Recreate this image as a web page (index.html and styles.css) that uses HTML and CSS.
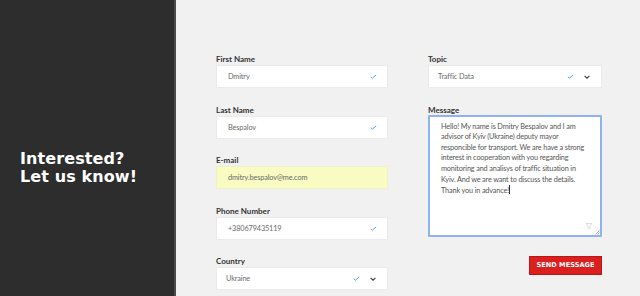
FILE: index.html
```html
<!DOCTYPE html>
<html lang="en">
<head>
    <meta charset="UTF-8">
    <meta name="viewport" content="width=device-width, initial-scale=1.0">
    <title>Contact</title>
    <link rel="stylesheet" href="styles.css">
</head>
<body>
    <div class="page">
        <aside class="side">
            <h1>Interested?<br>Let us know!</h1>
        </aside>
        <form class="contact">
            <div class="col">
                <div class="field">
                    <label>First Name</label>
                    <div class="input">
                        <span class="value">Dmitry</span>
                        <svg class="check" width="7" height="5" viewBox="0 0 7 5"><path d="M0.8 2.8 L2.4 4.2 L6.2 0.8" fill="none" stroke="#5aa2ea" stroke-width="1"/></svg>
                    </div>
                </div>
                <div class="field">
                    <label>Last Name</label>
                    <div class="input">
                        <span class="value">Bespalov</span>
                        <svg class="check" width="7" height="5" viewBox="0 0 7 5"><path d="M0.8 2.8 L2.4 4.2 L6.2 0.8" fill="none" stroke="#5aa2ea" stroke-width="1"/></svg>
                    </div>
                </div>
                <div class="field">
                    <label>E-mail</label>
                    <div class="input autofill">
                        <span class="value">dmitry.bespalov@me.com</span>
                    </div>
                </div>
                <div class="field">
                    <label>Phone Number</label>
                    <div class="input">
                        <span class="value">+380679435119</span>
                        <svg class="check" width="7" height="5" viewBox="0 0 7 5"><path d="M0.8 2.8 L2.4 4.2 L6.2 0.8" fill="none" stroke="#5aa2ea" stroke-width="1"/></svg>
                    </div>
                </div>
                <div class="field">
                    <label>Country</label>
                    <div class="input select">
                        <span class="value">Ukraine</span>
                        <svg class="check" width="7" height="5" viewBox="0 0 7 5"><path d="M0.8 2.8 L2.4 4.2 L6.2 0.8" fill="none" stroke="#5aa2ea" stroke-width="1"/></svg>
                        <svg class="chevron" width="6" height="4" viewBox="0 0 6 4"><path d="M0.6 0.8 L3 3.2 L5.4 0.8" fill="none" stroke="#444" stroke-width="1.2"/></svg>
                    </div>
                </div>
            </div>
            <div class="col">
                <div class="field">
                    <label>Topic</label>
                    <div class="input select">
                        <span class="value">Traffic Data</span>
                        <svg class="check" width="7" height="5" viewBox="0 0 7 5"><path d="M0.8 2.8 L2.4 4.2 L6.2 0.8" fill="none" stroke="#5aa2ea" stroke-width="1"/></svg>
                        <svg class="chevron" width="6" height="4" viewBox="0 0 6 4"><path d="M0.6 0.8 L3 3.2 L5.4 0.8" fill="none" stroke="#444" stroke-width="1.2"/></svg>
                    </div>
                </div>
                <div class="field">
                    <label>Message</label>
                    <div class="textarea">
                        <p>Hello! My name is Dmitry Bespalov and I am advisor of Kyiv (Ukraine) deputy mayor responcible for transport. We are have a strong interest in cooperation with you regarding monitoring and analisys of traffic situation in Kyiv. And we are want to discuss the details. Thank you in advance!<span class="caret"></span></p>
                        <svg class="helper" width="8" height="8" viewBox="0 0 8 8"><path d="M1 1.5 H7 L5 4 V6.5 H3 V4 Z" fill="none" stroke="#d6d6d6" stroke-width="0.8"/></svg>
                        <svg class="grip" width="5" height="5" viewBox="0 0 5 5"><path d="M0.5 4.5 L4.5 0.5 M2.5 4.5 L4.5 2.5" stroke="#999" stroke-width="0.8"/></svg>
                    </div>
                </div>
                <div class="actions">
                    <button type="button" class="send">SEND MESSAGE</button>
                </div>
            </div>
        </form>
    </div>
</body>
</html>
```

FILE: styles.css
```css
body {
    margin: 0;
    background: #f1f1f1;
    font-family: Lato, 'Liberation Sans', sans-serif;
}
.page {
    display: flex;
    height: 296px;
    overflow: hidden;
}
.side {
    width: 176px;
    flex-shrink: 0;
    box-sizing: border-box;
    background: #2d2d2d;
    border-right: 2px solid #4a4a4a;
    padding: 150px 0 0 20px;
}
.side h1 {
    margin: 0;
    color: #fff;
    font-family: 'DejaVu Sans', sans-serif;
    font-weight: bold;
    font-size: 16px;
    line-height: 18px;
    letter-spacing: 0.1px;
}
.contact {
    display: grid;
    grid-template-columns: 172px 174px;
    column-gap: 40px;
    padding: 53px 0 0 40px;
}
.col {
    display: flex;
    flex-direction: column;
}
.field {
    display: flex;
    flex-direction: column;
    margin-bottom: 15.6px;
}
.field label {
    font-size: 8px;
    font-weight: bold;
    line-height: 12px;
    color: #333;
}
.input {
    height: 23px;
    box-sizing: border-box;
    background: #fff;
    border: 1px solid #ebebeb;
    display: flex;
    align-items: center;
    padding: 0 10px 0 11px;
    gap: 10px;
}
.input .value {
    flex: 1;
    font-size: 7.3px;
    letter-spacing: -0.12px;
    color: #6a6a6a;
}
.input.autofill {
    background: #f8fbc2;
    border-color: #f0f2c6;
}
.input.select {
    padding-left: 9px;
    padding-right: 11px;
}
.textarea {
    position: relative;
    height: 122px;
    box-sizing: border-box;
    background: #fff;
    border: 2px solid #8db3f2;
    border-radius: 1px;
    padding: 5px 13px 0 11px;
    margin-top: -1px;
}
.textarea p {
    margin: 0;
    font-size: 7.3px;
    letter-spacing: -0.15px;
    line-height: 10.6px;
    color: #555;
}
.caret {
    display: inline-block;
    width: 1px;
    height: 9px;
    background: #333;
    vertical-align: -1px;
}
.helper {
    position: absolute;
    right: 7px;
    bottom: 5px;
}
.grip {
    position: absolute;
    right: 0;
    bottom: 0;
}
.actions {
    display: flex;
    justify-content: flex-end;
    margin-top: 3.5px;
}
.send {
    background: #db1f1f;
    color: #fff;
    border: 1px solid #b81818;
    font-family: 'DejaVu Sans', sans-serif;
    font-weight: bold;
    font-size: 6.6px;
    height: 19px;
    width: 73px;
    padding: 0;
    cursor: pointer;
}
```
